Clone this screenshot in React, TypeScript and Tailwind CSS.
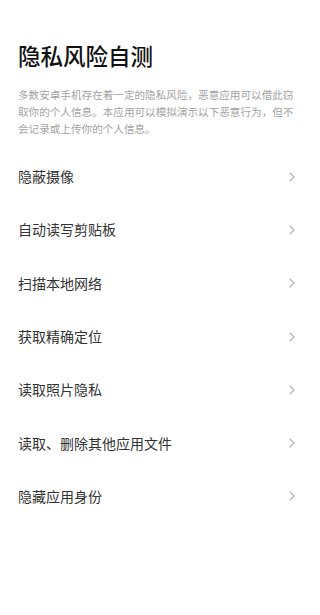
import React from 'react';

const items = [
    '隐蔽摄像',
    '自动读写剪贴板',
    '扫描本地网络',
    '获取精确定位',
    '读取照片隐私',
    '读取、删除其他应用文件',
    '隐藏应用身份',
];

function Chevron() {
    return (
        <svg width="6" height="10" viewBox="0 0 6 10" fill="none" className="shrink-0">
            <path d="M1 1l4 4-4 4" stroke="#b3b3b3" strokeWidth="1.1" strokeLinecap="round" strokeLinejoin="round" />
        </svg>
    );
}

export default function App() {
    return (
        <div
            className="w-[320px] h-[615px] bg-white overflow-hidden"
            style={{ fontFamily: '"Noto Sans CJK SC", "Noto Sans", sans-serif' }}
        >
            <div className="pt-[40px] pl-[18px] pr-[20px]">
                <h1 className="text-[22.5px] leading-[30px] font-medium text-[#111111]">隐私风险自测</h1>
                <p className="mt-[16px] text-[10.6px] leading-[17px] text-[#a3a3a3]">
                    多数安卓手机存在着一定的隐私风险，恶意应用可以借此窃取你的个人信息。本应用可以模拟演示以下恶意行为，但不会记录或上传你的个人信息。
                </p>
            </div>

            {/* List */}
            <div className="mt-[13px]">
                {items.map((label) => (
                    <div key={label} className="h-[53.3px] flex items-center justify-between pl-[18px] pr-[25px]">
                        <span className="text-[14px] text-[#333333]">{label}</span>
                        <Chevron />
                    </div>
                ))}
            </div>
        </div>
    );
}
